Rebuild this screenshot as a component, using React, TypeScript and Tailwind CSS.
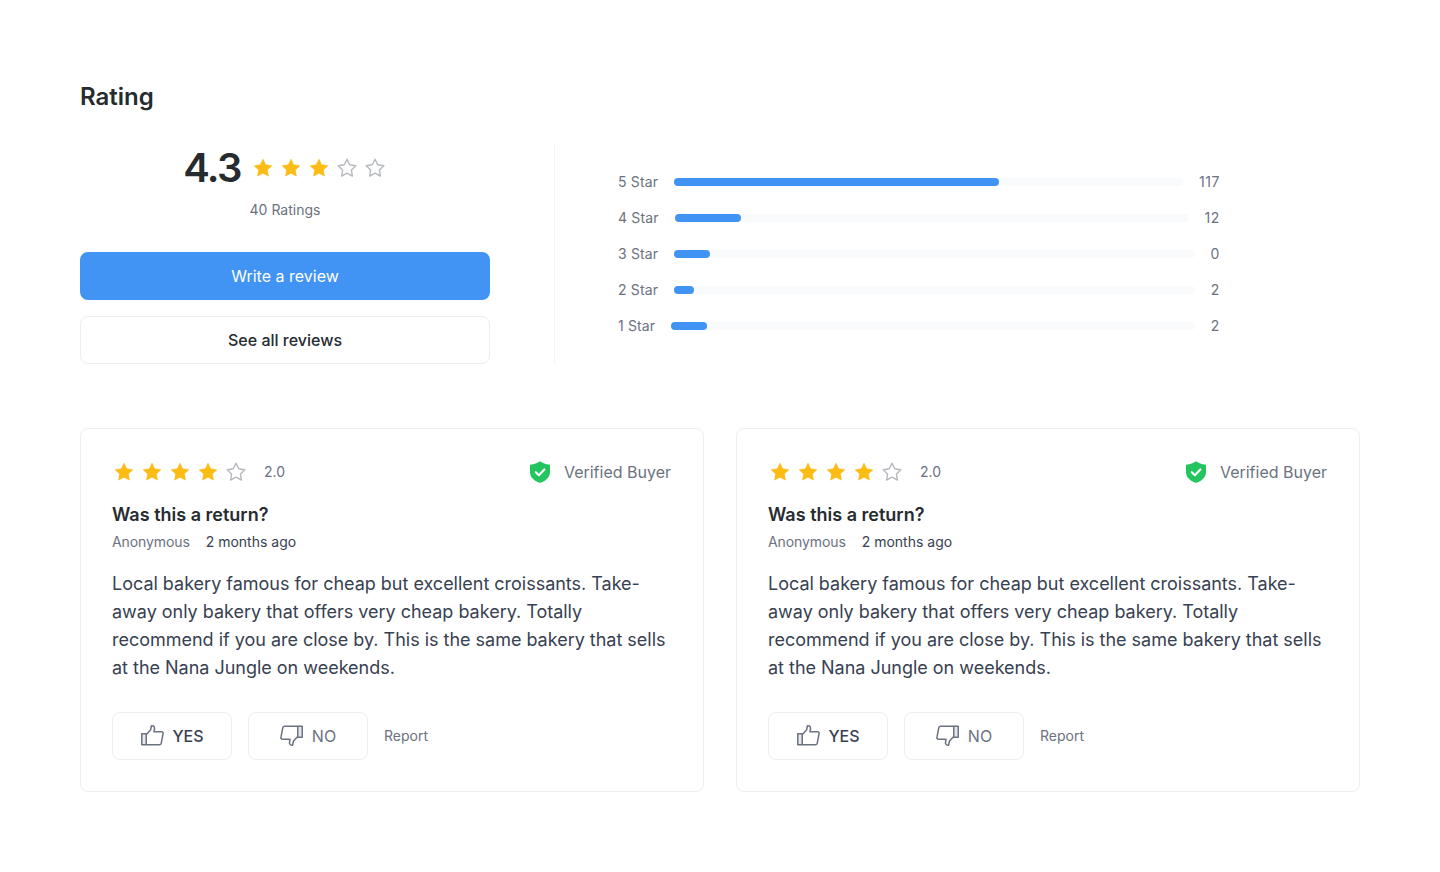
const bars = [
  { label: "5 Star", fill: 325, value: "117" },
  { label: "4 Star", fill: 66, value: "12" },
  { label: "3 Star", fill: 36, value: "0" },
  { label: "2 Star", fill: 20, value: "2" },
  { label: "1 Star", fill: 36, value: "2" },
]

const starPath = "M12 3.200l2.700 5.600 6.100.9-4.400 4.300 1 6.100-5.400-2.900-5.400 2.900 1-6.100-4.400-4.300 6.100-.9L12 3.200z"

const Star = ({ filled }: { filled: boolean }) => (
  <svg width="24" height="24" viewBox="0 0 24 24" className="shrink-0">
    {filled
      ? <path d={starPath} fill="#fbbc16" stroke="#fbbc16" strokeWidth="0.6" strokeLinejoin="round" />
      : <path d={starPath} fill="none" stroke="#b5b8bd" strokeWidth="1.4" strokeLinejoin="round" />}
  </svg>
)

const Stars = ({ count }: { count: number }) => (
  <div className="flex items-center gap-1">
    {[0, 1, 2, 3, 4].map(i => <Star key={i} filled={i < count} />)}
  </div>
)

const ShieldCheck = () => (
  <svg width="24" height="24" viewBox="0 0 24 24">
    <path d="M12 1.200c2.800 1.900 5.800 3 9 3.300.6.100 1 .5 1 1.100v6.400c0 4.800-3.600 8.800-9.600 10.700-.3.100-.5.100-.8 0C5.600 20.800 2 16.800 2 12V5.600c0-.6.400-1 1-1.100 3.200-.3 6.200-1.400 9-3.300z" fill="#22c55e" />
    <path d="M7.800 12.300l3 2.900 5.600-5.700" fill="none" stroke="#fff" strokeWidth="2.200" strokeLinecap="round" strokeLinejoin="round" />
  </svg>
)

const thumbCuff = "M1.750 9.750h4.500v11h-4.500z"
const thumbHand = "M6.250 10.500L10.500 6l1-4.250c2-.25 3.300 1.250 3 3.250L14 7.750h7.500c1.300 0 1.800 1.050 1.500 2.250l-1.800 9.300c-.2 1-.8 1.450-1.700 1.450H6.250"

const ThumbUp = () => (
  <svg width="24" height="24" viewBox="0 0 24 24" fill="none" stroke="#6b7280" strokeWidth="1.500" strokeLinejoin="round">
    <path d={thumbCuff} fill="#e5e7eb" />
    <path d={thumbHand} />
  </svg>
)

const ThumbDown = () => (
  <svg width="24" height="24" viewBox="0 0 24 24" fill="none" stroke="#6b7280" strokeWidth="1.500" strokeLinejoin="round">
    <g transform="rotate(180 12 11.500)">
      <path d={thumbCuff} fill="#e5e7eb" />
      <path d={thumbHand} />
    </g>
  </svg>
)

const ReviewCard = () => (
  <div className="flex-1 rounded-lg border border-[#eceef0] bg-white p-[31px]">
    <div className="flex h-6 items-center justify-between">
      <div className="flex items-center gap-4">
        <Stars count={4} />
        <span className="text-sm text-[#6b7280]">2.0</span>
      </div>
      <div className="flex items-center gap-3 pr-px">
        <ShieldCheck />
        <span className="text-base text-[#6b7280]">Verified Buyer</span>
      </div>
    </div>
    <h3 className="mt-[17px] text-lg leading-7 font-semibold text-[#262b2f]">Was this a return?</h3>
    <div className="mt-[3px] flex items-center gap-4 text-sm leading-5">
      <span className="tracking-[-0.1px] text-[#6b7280]">Anonymous</span>
      <span className="text-[#374151]">2 months ago</span>
    </div>
    <p className="mt-[18px] text-lg leading-7 tracking-[-0.015px] text-[#374151]">
      Local bakery famous for cheap but excellent croissants. Take-away only bakery that offers very cheap bakery. Totally recommend if you are close by. This is the same bakery that sells at the Nana Jungle on weekends.
    </p>
    <div className="mt-[30px] flex items-center gap-4">
      <button className="flex h-12 w-[120px] items-center justify-center gap-2 rounded-lg border border-[#eceef0] text-base font-medium text-[#374151]">
        <ThumbUp />
        YES
      </button>
      <button className="flex h-12 w-[120px] items-center justify-center gap-2 rounded-lg border border-[#eceef0] text-base text-[#6b7280]">
        <ThumbDown />
        NO
      </button>
      <span className="text-sm text-[#6b7280]">Report</span>
    </div>
  </div>
)

export default function App() {
  return (
    <div className="min-h-[872px] bg-white px-20 pt-20 font-['Inter',sans-serif]">
      <h1 className="pt-px text-2xl leading-[31px] font-semibold text-[#262b2f]">Rating</h1>

      <div className="mt-8 flex">
        <div className="w-[410px]">
          <div className="flex h-12 items-center justify-center gap-2.5">
            <span className="text-[40px] leading-none font-semibold tracking-[-0.04em] text-[#262b2f]">4.3</span>
            <Stars count={3} />
          </div>
          <p className="mt-[8px] text-center text-sm leading-5 text-[#6b7280]">40 Ratings</p>
          <button className="mt-8 block h-12 w-full rounded-lg bg-[#4193f4] text-base text-white">Write a review</button>
          <button className="mt-4 block h-12 w-full rounded-lg border border-[#eceef0] bg-white text-base font-medium text-[#262b2f]">See all reviews</button>
        </div>

        <div className="mx-16 w-px bg-[#f3f4f6]" />

        <div className="-ml-px flex w-[602px] flex-col pt-5">
          {bars.map(bar => (
            <div key={bar.label} className="flex h-9 items-center gap-4">
              <span className="text-sm tracking-[0.15px] text-[#6b7280]">{bar.label}</span>
              <div className="h-2 flex-1 rounded-full bg-[#f9fafb]">
                <div className="h-2 rounded-full bg-[#4193f4]" style={{ width: bar.fill }} />
              </div>
              <span className="text-sm tracking-[0.6px] text-[#6b7280]">{bar.value}</span>
            </div>
          ))}
        </div>
      </div>

      <div className="mt-16 flex gap-8">
        <ReviewCard />
        <ReviewCard />
      </div>
    </div>
  )
}
